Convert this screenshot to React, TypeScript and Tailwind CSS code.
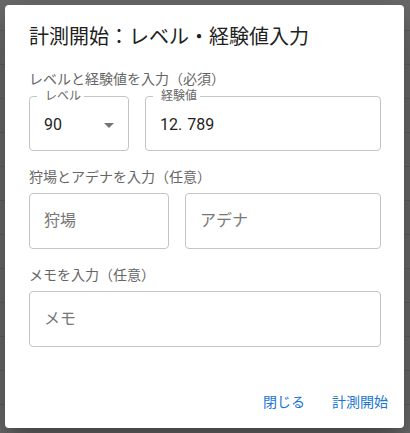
const font = { fontFamily: 'Roboto, "Noto Sans CJK JP", sans-serif' }

function Outlined({ label, value, placeholder, select, className }: {
  label?: string
  value?: React.ReactNode
  placeholder?: string
  select?: boolean
  className?: string
}) {
  return (
    <div className={`relative flex items-center border border-[#c4c4c4] rounded-[4px] pl-[14px] ${className ?? ''}`}>
      {label && (
        <span className="absolute left-[7px] -top-[7px] bg-white pl-[8px] pr-[3px] text-[12px] leading-[12px] text-[#666]">
          {label}
        </span>
      )}
      {value ? (
        <span className="text-[16px] text-[#1f1f1f] pt-[3px]">{value}</span>
      ) : (
        <span className="text-[16px] text-[#777]">{placeholder}</span>
      )}
      {select && (
        <svg className="absolute right-[7px] top-1/2 -translate-y-1/2 mt-[1px]" width="24" height="24" viewBox="0 0 24 24">
          <path d="M7 10l5 5 5-5z" fill="#757575" />
        </svg>
      )}
    </div>
  )
}

export default function App() {
  return (
    <div className="relative w-[410px] h-[433px] overflow-hidden bg-[#6a6a6a]" style={font}>
      {/* dimmed page behind */}
      <div className="flex flex-col">
        {[0, 1, 2, 3, 4, 5, 6, 7, 8, 9, 10, 11].map(i => (
          <div key={i} className="h-[34px] border-b border-[#5e5e5e] first:h-[31px]" />
        ))}
      </div>

      {/* Dialog */}
      <div className="absolute left-[5px] top-[5px] w-[399px] h-[423px] bg-white rounded-[4px] shadow-[0_11px_15px_-7px_rgba(0,0,0,0.2),0_24px_38px_3px_rgba(0,0,0,0.14),0_9px_46px_8px_rgba(0,0,0,0.12)] flex flex-col">
        <h2 className="pt-[16px] pl-[24px] text-[20px] leading-[32px] text-[#212121] font-normal">
          計測開始：レベル・経験値入力
        </h2>

        <div className="pl-[24px] pr-[23px] flex flex-col">
          <p className="mt-[16px] text-[14px] leading-[20px] text-[#666]">レベルと経験値を入力（必須）</p>
          <div className="mt-[7px] flex gap-4">
            <Outlined label="レベル" value="90" select className="w-[100px] h-[55px]" />
            <Outlined
              label="経験値"
              value={<>12.<span className="ml-[5px]">789</span></>}
              className="flex-1 h-[55px]"
            />
          </div>

          <p className="mt-[16px] text-[14px] leading-[20px] text-[#666]">狩場とアデナを入力（任意）</p>
          <div className="mt-[6px] flex gap-4">
            <Outlined placeholder="狩場" className="w-[140px] h-[56px]" />
            <Outlined placeholder="アデナ" className="flex-1 h-[56px]" />
          </div>

          <p className="mt-[16px] text-[14px] leading-[20px] text-[#666]">メモを入力（任意）</p>
          <Outlined placeholder="メモ" className="mt-[6px] h-[56px]" />
        </div>

        <div className="mt-auto flex justify-end gap-2 p-2">
          <button className="min-w-[64px] h-[36px] px-2 text-[14px] text-[#1976d2]">閉じる</button>
          <button className="min-w-[64px] h-[36px] px-2 text-[14px] text-[#1976d2]">計測開始</button>
        </div>
      </div>
    </div>
  )
}
